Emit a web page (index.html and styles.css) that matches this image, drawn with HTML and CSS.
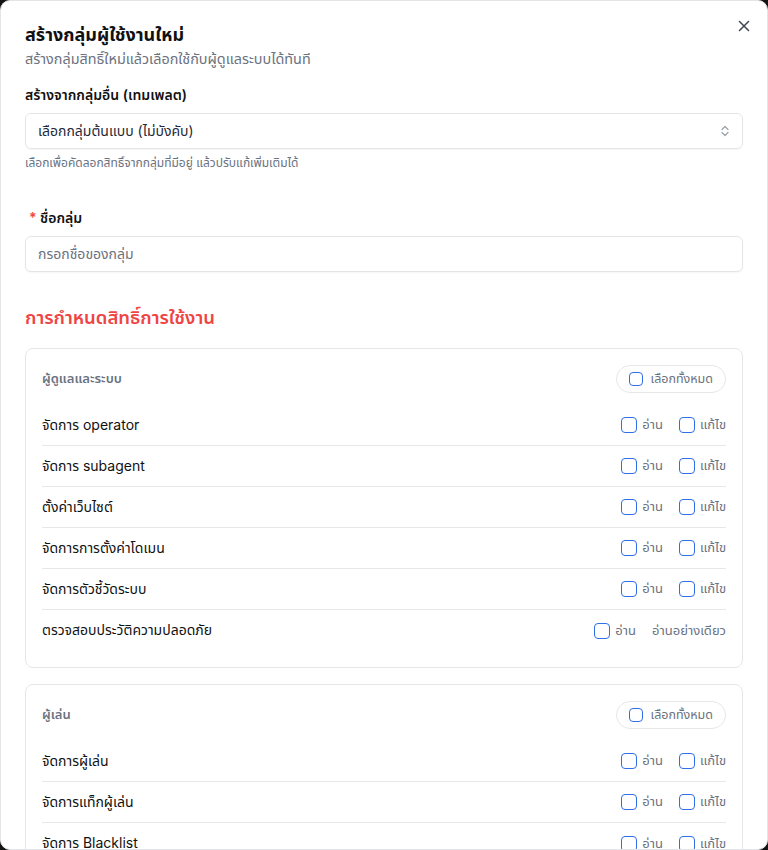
FILE: index.html
```html
<!DOCTYPE html>
<html lang="th">
<head>
<meta charset="utf-8">
<link rel="stylesheet" href="styles.css">
</head>
<body>
<div class="modal">
  <button class="close" aria-label="close">
    <svg width="12" height="12" viewBox="0 0 12 12"><path d="M1.5 1.5L10.5 10.5M10.5 1.5L1.5 10.5" stroke="#3f4652" stroke-width="1.5" stroke-linecap="round"/></svg>
  </button>
  <h1 class="title">สร้างกลุ่มผู้ใช้งานใหม่</h1>
  <p class="subtitle">สร้างกลุ่มสิทธิ์ใหม่แล้วเลือกใช้กับผู้ดูแลระบบได้ทันที</p>

  <div class="field">
    <label class="label">สร้างจากกลุ่มอื่น (เทมเพลต)</label>
    <div class="select">
      <span>เลือกกลุ่มต้นแบบ (ไม่บังคับ)</span>
      <svg width="10" height="14" viewBox="0 0 10 14"><path d="M2 5.5L5 2.5L8 5.5M2 8.5L5 11.5L8 8.5" fill="none" stroke="#9aa0aa" stroke-width="1.2" stroke-linecap="round" stroke-linejoin="round"/></svg>
    </div>
    <p class="help">เลือกเพื่อคัดลอกสิทธิ์จากกลุ่มที่มีอยู่ แล้วปรับแก้เพิ่มเติมได้</p>
  </div>

  <div class="field field-name">
    <label class="label"><span class="req">*</span> ชื่อกลุ่ม</label>
    <div class="input">กรอกชื่อของกลุ่ม</div>
  </div>

  <h2 class="section">การกำหนดสิทธิ์การใช้งาน</h2>

  <div class="card">
    <div class="card-head">
      <span class="card-title">ผู้ดูแลและระบบ</span>
      <span class="pill"><span class="cb cb-sm"></span>เลือกทั้งหมด</span>
    </div>
    <div class="row"><span class="name">จัดการ operator</span><span class="opts"><span class="opt"><span class="cb"></span>อ่าน</span><span class="opt"><span class="cb"></span>แก้ไข</span></span></div>
    <div class="row"><span class="name">จัดการ subagent</span><span class="opts"><span class="opt"><span class="cb"></span>อ่าน</span><span class="opt"><span class="cb"></span>แก้ไข</span></span></div>
    <div class="row"><span class="name">ตั้งค่าเว็บไซต์</span><span class="opts"><span class="opt"><span class="cb"></span>อ่าน</span><span class="opt"><span class="cb"></span>แก้ไข</span></span></div>
    <div class="row"><span class="name">จัดการการตั้งค่าโดเมน</span><span class="opts"><span class="opt"><span class="cb"></span>อ่าน</span><span class="opt"><span class="cb"></span>แก้ไข</span></span></div>
    <div class="row"><span class="name">จัดการตัวชี้วัดระบบ</span><span class="opts"><span class="opt"><span class="cb"></span>อ่าน</span><span class="opt"><span class="cb"></span>แก้ไข</span></span></div>
    <div class="row"><span class="name">ตรวจสอบประวัติความปลอดภัย</span><span class="opts"><span class="opt"><span class="cb"></span>อ่าน</span><span class="opt muted">อ่านอย่างเดียว</span></span></div>
  </div>

  <div class="card">
    <div class="card-head">
      <span class="card-title">ผู้เล่น</span>
      <span class="pill"><span class="cb cb-sm"></span>เลือกทั้งหมด</span>
    </div>
    <div class="row"><span class="name">จัดการผู้เล่น</span><span class="opts"><span class="opt"><span class="cb"></span>อ่าน</span><span class="opt"><span class="cb"></span>แก้ไข</span></span></div>
    <div class="row"><span class="name">จัดการแท็กผู้เล่น</span><span class="opts"><span class="opt"><span class="cb"></span>อ่าน</span><span class="opt"><span class="cb"></span>แก้ไข</span></span></div>
    <div class="row"><span class="name">จัดการ Blacklist</span><span class="opts"><span class="opt"><span class="cb"></span>อ่าน</span><span class="opt"><span class="cb"></span>แก้ไข</span></span></div>
  </div>
</div>
</body>
</html>
```

FILE: styles.css
```css
* { box-sizing: border-box; }
html, body { margin: 0; padding: 0; }
body {
  background: #141414;
  font-family: Inter, "Noto Sans", "Noto Sans Thai", sans-serif;
  color: #111827;
  width: 768px;
  height: 850px;
  overflow: hidden;
}
.modal {
  position: relative;
  width: 768px;
  height: 850px;
  background: #fff;
  border: 1px solid #e3e4e8;
  border-radius: 10px;
  overflow: hidden;
  padding: 20px 24px 24px 24px;
}
.close {
  position: absolute;
  top: 18px;
  right: 16px;
  width: 14px;
  height: 14px;
  padding: 0;
  border: 0;
  background: none;
  display: flex;
  align-items: center;
  justify-content: center;
}
.title {
  margin: 0;
  font-size: 18px;
  line-height: 28px;
  font-weight: 700;
  color: #111;
}
.subtitle {
  margin: 0;
  font-size: 14.4px;
  line-height: 20px;
  color: #6b7280;
}
.field { margin-top: 16px; }
.field-name { margin-top: 37px; }
.label {
  display: block;
  font-size: 14px;
  line-height: 20px;
  font-weight: 600;
  color: #111;
}
.req { color: #ef4444; margin-left: 4px; }
.select, .input {
  margin-top: 8px;
  height: 36px;
  border: 1px solid #e4e5e9;
  border-radius: 6px;
  padding: 0 12px;
  display: flex;
  align-items: center;
  justify-content: space-between;
  font-size: 14px;
  box-shadow: 0 1px 2px rgba(0,0,0,0.04);
}
.select span { color: #1f2937; }
.input { color: #6b7280; }
.help {
  margin: 6px 0 0 0;
  font-size: 12px;
  line-height: 16px;
  color: #6b7280;
}
.section {
  margin: 31px 0 17px 0;
  font-size: 18.5px;
  line-height: 28px;
  font-weight: 600;
  color: #ef4444;
}
.card {
  border: 1px solid #e5e7eb;
  border-radius: 8px;
  padding: 16px 16px 16px 16px;
  margin-bottom: 16px;
}
.card-head {
  display: flex;
  align-items: center;
  justify-content: space-between;
  margin-bottom: 12px;
}
.card-title {
  font-size: 13px;
  font-weight: 600;
  color: #6b7280;
}
.pill {
  display: flex;
  align-items: center;
  gap: 8px;
  height: 28px;
  padding: 0 12px 0 12px;
  border: 1px solid #e5e7eb;
  border-radius: 999px;
  font-size: 12.5px;
  color: #6b7280;
}
.cb {
  display: inline-block;
  width: 16px;
  height: 16px;
  border: 1.5px solid #2f6fe8;
  border-radius: 4px;
  background: #fff;
  flex: none;
}
.cb-sm { width: 14px; height: 14px; }
.row {
  display: flex;
  align-items: center;
  justify-content: space-between;
  height: 41px;
  font-size: 14px;
  color: #111;
  border-bottom: 1px solid #e5e7eb;
}
.row:last-child { border-bottom: 0; }
.opts { display: flex; align-items: center; gap: 16px; }
.opt {
  display: flex;
  align-items: center;
  gap: 5px;
  font-size: 13px;
  color: #6b7280;
}
```
